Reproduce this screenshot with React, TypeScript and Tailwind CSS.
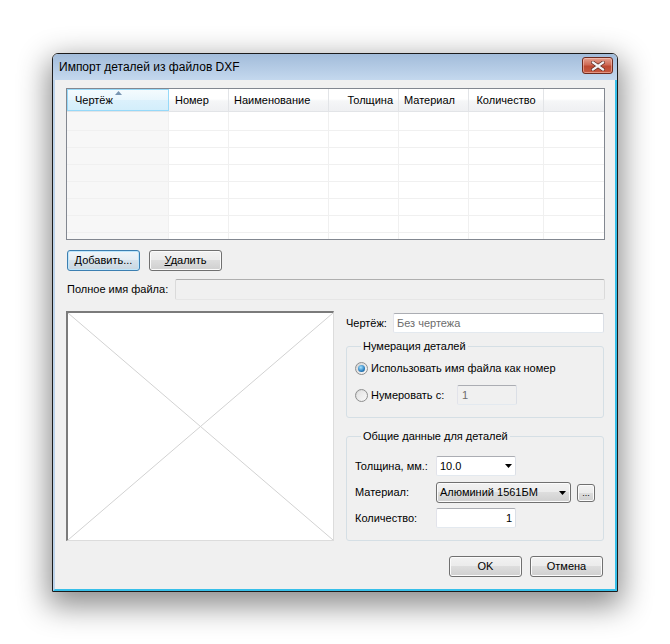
import React from "react";

const cols = [
  { cls: "w-[102px] pl-[7px]", label: "Чертёж", sorted: true },
  { cls: "w-[60px] pl-[6px]", label: "Номер" },
  { cls: "w-[100px] pl-[5px]", label: "Наименование" },
  { cls: "w-[70px] pr-[5px] justify-end", label: "Толщина" },
  { cls: "w-[70px] pl-[5px]", label: "Материал" },
  { cls: "w-[75px] justify-center", label: "Количество" },
];

const cellW = ["w-[102px]", "w-[60px]", "w-[100px]", "w-[70px]", "w-[70px]", "w-[75px]"];

function Arrow() {
  return (
    <svg width="7" height="4" viewBox="0 0 7 4" className="block">
      <path d="M0 0h7L3.5 4z" fill="#000" />
    </svg>
  );
}

function Button({
  children,
  primary,
}: {
  children: React.ReactNode;
  primary?: boolean;
}) {
  return (
    <div
      className={`flex h-[21px] w-[73px] items-center justify-center rounded-[3px] border ${
        primary
          ? "border-[#3c7fb1] bg-[linear-gradient(#f0f5f9,#e5edf3_50%,#d6e2eb_50%,#c9d6e0)] shadow-[inset_0_0_0_1px_#bfe6fb]"
          : "border-[#707070] bg-[linear-gradient(#f2f2f2,#ebebeb_50%,#dddddd_50%,#cfcfcf)] shadow-[inset_0_0_0_1px_#fbfbfb]"
      }`}
    >
      {children}
    </div>
  );
}

function Radio({ checked }: { checked?: boolean }) {
  return (
    <span className="flex h-[13px] w-[13px] items-center justify-center rounded-full border border-[#8e8f8f] bg-[linear-gradient(135deg,#d2d2d2,#fbfbfb)]">
      {checked ? (
        <span className="h-[7px] w-[7px] rounded-full bg-[radial-gradient(circle_at_40%_35%,#a6e3ff,#2a7fc0_60%,#0d3f6e)]" />
      ) : (
        <span className="h-[9px] w-[9px] rounded-full bg-[linear-gradient(135deg,#e2e2e2,#f7f7f7)]" />
      )}
    </span>
  );
}

const textBox =
  "border border-t-[#abadb3] border-l-[#e2e3ea] border-r-[#dbdfe6] border-b-[#e3e9ef] rounded-[2px]";

export default function App() {
  return (
    <div className="h-[644px] w-[670px] overflow-hidden bg-white pl-[52px] pt-[53px] font-['Liberation_Sans',Arial,sans-serif] text-[11px] leading-[13px] text-black">
      <div className="flex h-[539px] w-[566px] flex-col overflow-hidden rounded-t-[6px] border border-[#1c1c1c] shadow-[0_10px_30px_4px_rgba(0,0,0,0.45)]">
        {/* title bar */}
        <div className="flex h-[26px] shrink-0 items-start justify-between bg-[linear-gradient(#a2bcda,#c4d8ee)] pl-[6px] pr-[4px]">
          <div className="self-center text-[12px] leading-[15px] text-[#000]">
            Импорт деталей из файлов DXF
          </div>
          <div className="mt-[3px] flex h-[17px] w-[31px] items-center justify-center rounded-[3px] border border-[#6e2b1f] bg-[linear-gradient(#e4a190,#cf6a55_45%,#bd4a32_55%,#c65a41)] shadow-[inset_0_0_0_1px_rgba(255,210,200,0.5)]">
            <svg width="14" height="10" viewBox="0 0 14 10">
              <path d="M2 1.5L12 8.5M12 1.5L2 8.5" stroke="#5b2a22" strokeWidth="3.6" strokeLinecap="square" />
              <path d="M2 1.5L12 8.5M12 1.5L2 8.5" stroke="#f4f4f4" strokeWidth="2.2" strokeLinecap="square" />
            </svg>
          </div>
        </div>

        {/* frame + client */}
        <div className="flex flex-1 flex-col border-b-2 border-l-2 border-r-2 border-b-[#36bfe9] border-l-[#bdd3ea] border-r-[#36bfe9]">
          <div className="flex flex-1 flex-col bg-[#f0f0f0] pl-[11px] pt-[8px]">
            {/* list */}
            <div className="h-[152px] w-[539px] overflow-hidden border border-[#828790] bg-white">
              <div className="flex h-[23px] bg-[linear-gradient(#ffffff,#ffffff_45%,#f5f6f7_55%,#eff0f2)] border-b border-[#e2e4e7]">
                {cols.map((c) => (
                  <div
                    key={c.label}
                    className={`relative flex items-center ${c.cls} ${
                      c.sorted
                        ? "border border-[#96d9f9] bg-[linear-gradient(#f4fbfe,#e8f6fd_50%,#dcf1fc_50%,#d3eefb)]"
                        : "border-r border-[#e2e4e7]"
                    }`}
                  >
                    {c.sorted && (
                      <svg
                        width="7"
                        height="4"
                        viewBox="0 0 7 4"
                        className="absolute left-[47px] top-[1px]"
                      >
                        <path d="M0 4h7L3.5 0z" fill="#7895b1" />
                      </svg>
                    )}
                    {c.label}
                  </div>
                ))}
                <div className="flex-1" />
              </div>
              {[19, 17, 17, 17, 17, 17, 17, 17].map((h, i) => (
                <div
                  key={i}
                  className={`flex border-b border-[#f0f0f0] ${h === 19 ? "h-[19px]" : "h-[17px]"}`}
                >
                  {cellW.map((w, j) => (
                    <div
                      key={j}
                      className={`${w} border-r border-[#f0f0f0] ${j === 0 ? "bg-[#f7f7f7]" : ""}`}
                    />
                  ))}
                  <div className="flex-1" />
                </div>
              ))}
            </div>

            {/* add / delete */}
            <div className="mt-[10px] flex gap-[9px] pl-[1px]">
              <Button primary>Добавить...</Button>
              <Button>
                <span>
                  <span className="underline">У</span>далить
                </span>
              </Button>
            </div>

            {/* full file name */}
            <div className="mt-[8px] flex h-[21px] items-center pl-[1px]">
              <div className="w-[108px]">Полное имя файла:</div>
              <div className="h-[21px] w-[430px] rounded-[2px] border border-t-[#afafaf] border-l-[#dadada] border-r-[#dadada] border-b-[#e6e6e6] bg-[#f0f0f0]" />
            </div>

            {/* main area */}
            <div className="mt-[11px] flex h-[230px] gap-[12px]">
              <div className="h-[230px] w-[268px] border-b border-l-2 border-r border-t-2 border-b-[#dcdcdc] border-l-[#7b7b7b] border-r-[#dcdcdc] border-t-[#7b7b7b] bg-white">
                <svg className="block h-full w-full" viewBox="0 0 100 100" preserveAspectRatio="none">
                  <path d="M0 0L100 100M100 0L0 100" stroke="#d2d2d2" strokeWidth="1" vectorEffect="non-scaling-stroke" />
                </svg>
              </div>

              <div className="flex w-[258px] flex-col">
                <div className="mt-[2px] flex h-[20px] items-center">
                  <div className="w-[47px]">Чертёж:</div>
                  <div className={`flex h-[20px] flex-1 items-center bg-white pl-[3px] text-[#6d6d6d] ${textBox}`}>
                    Без чертежа
                  </div>
                </div>

                <fieldset className="mt-[7px] h-[78px] rounded-[3px] border border-[#d5dfe5] pl-[8px]">
                  <legend className="ml-[6px] px-[2px] leading-[13px]">Нумерация деталей</legend>
                  <div className="mt-[5px] flex h-[20px] items-center gap-[3px]">
                    <Radio checked />
                    <span>Использовать имя файла как номер</span>
                  </div>
                  <div className="mt-[7px] flex h-[20px] items-center">
                    <Radio />
                    <span className="ml-[3px] w-[86px]">Нумеровать с:</span>
                    <div className={`flex h-[20px] w-[60px] items-center bg-[#f0f0f0] pl-[4px] text-[#6d6d6d] ${textBox}`}>
                      1
                    </div>
                  </div>
                </fieldset>

                <fieldset className="mt-[12px] h-[111px] rounded-[3px] border border-[#d5dfe5] pl-[8px]">
                  <legend className="ml-[6px] px-[2px] leading-[13px]">Общие данные для деталей</legend>
                  <div className="mt-[13px] flex h-[20px] items-center">
                    <div className="w-[81px]">Толщина, мм.:</div>
                    <div className={`flex h-[20px] w-[80px] items-center justify-between bg-white pl-[3px] pr-[3px] ${textBox}`}>
                      <span>10.0</span>
                      <Arrow />
                    </div>
                  </div>
                  <div className="mt-[6px] flex h-[21px] items-center">
                    <div className="w-[81px]">Материал:</div>
                    <div className="flex h-[21px] w-[135px] items-center justify-between rounded-[3px] border border-[#707070] bg-[linear-gradient(#f2f2f2,#ebebeb_50%,#dddddd_50%,#cfcfcf)] pl-[3px] pr-[4px] shadow-[inset_0_0_0_1px_#fbfbfb]">
                      <span>Алюминий 1561БМ</span>
                      <Arrow />
                    </div>
                    <div className="ml-[6px] flex h-[18px] w-[18px] items-end justify-center rounded-[3px] border border-[#707070] bg-[linear-gradient(#f2f2f2,#ebebeb_50%,#dddddd_50%,#cfcfcf)] pb-[3px] text-[9px] leading-[9px] shadow-[inset_0_0_0_1px_#fbfbfb]">
                      ...
                    </div>
                  </div>
                  <div className="mt-[5px] flex h-[20px] items-center">
                    <div className="w-[81px]">Количество:</div>
                    <div className={`flex h-[20px] w-[80px] items-center justify-end bg-white pr-[3px] ${textBox}`}>
                      1
                    </div>
                  </div>
                </fieldset>
              </div>
            </div>

            {/* ok / cancel */}
            <div className="mt-[15px] flex justify-end gap-[8px] pr-[12px]">
              <Button>OK</Button>
              <Button>Отмена</Button>
            </div>
          </div>
        </div>
      </div>
    </div>
  );
}
